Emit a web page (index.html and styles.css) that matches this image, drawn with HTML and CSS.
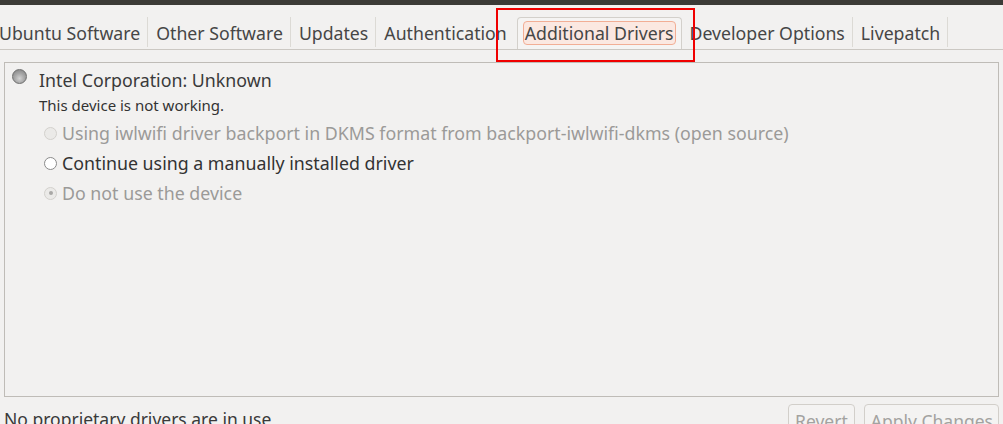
FILE: index.html
```html
<!DOCTYPE html>
<html>
<head>
<meta charset="utf-8">
<link rel="stylesheet" href="styles.css">
</head>
<body>
<div class="topbar"></div>
<div class="tabs">
  <div class="tab">Ubuntu Software</div>
  <div class="tab">Other Software</div>
  <div class="tab">Updates</div>
  <div class="tab tab-last-before">Authentication</div>
  <div class="tab tab-active"><span class="focus">Additional Drivers</span><div class="annot"></div></div>
  <div class="tab">Developer Options</div>
  <div class="tab">Livepatch</div>
</div>
<div class="frame">
  <div class="device">
    <span class="radio-big"></span>
    <span class="device-name">Intel Corporation: Unknown</span>
  </div>
  <div class="status">This device is not working.</div>
  <div class="options">
    <div class="option disabled"><span class="radio"></span><span>Using iwlwifi driver backport in DKMS format from backport-iwlwifi-dkms (open source)</span></div>
    <div class="option"><span class="radio"></span><span>Continue using a manually installed driver</span></div>
    <div class="option disabled"><span class="radio checked"></span><span>Do not use the device</span></div>
  </div>
</div>
<div class="footer">
  <div class="footer-text">No proprietary drivers are in use</div>
  <div class="buttons">
    <div class="btn btn-revert">Revert</div>
    <div class="btn">Apply Changes</div>
  </div>
</div>
</body>
</html>
```

FILE: styles.css
```css
html, body {
  margin: 0;
  padding: 0;
}
body {
  background: #f2f1f0;
  font-family: "Noto Sans", "DejaVu Sans", sans-serif;
  color: #3c3c3c;
  width: 1003px;
  height: 424px;
  overflow: hidden;
}
.topbar {
  height: 5px;
  background: #3c3b37;
}
.tabs {
  display: flex;
  padding-top: 12px;
  padding-bottom: 2px;
  border-bottom: 1px solid #cbc8c3;
  margin-left: -9px;
}
.tab {
  height: 30px;
  box-sizing: border-box;
  padding: 1px 7px 0 8px;
  display: flex;
  align-items: center;
  border-right: 1px solid #dcdad5;
  font-size: 17.7px;
  color: #464646;
  white-space: nowrap;
}
.tab-last-before {
  border-right: none;
  padding-right: 10px;
}
.tab-active {
  position: relative;
  height: 32px;
  margin-bottom: -2px;
  padding: 0 5px;
  border: 1px solid #d3d0cb;
  border-bottom: none;
  border-radius: 4px 4px 0 0;
  background: #f5f4f3;
  align-items: flex-start;
}
.focus {
  margin-top: 3px;
  padding: 0 1px;
  height: 22px;
  line-height: 22px;
  background: #fbe8e1;
  border: 1px solid #f2ae95;
  border-radius: 4px;
}
.annot {
  position: absolute;
  left: -22px;
  top: -10px;
  width: 195px;
  height: 50px;
  border: 2px solid #f00000;
}
.frame {
  margin: 12px 4px 0 4px;
  height: 333px;
  border: 1px solid #bfbcb7;
}
.device {
  display: flex;
  align-items: flex-start;
  padding: 5px 0 0 7px;
}
.radio-big {
  margin-top: 1px;
  width: 13px;
  height: 13px;
  border-radius: 50%;
  border: 1px solid #6e6e6e;
  background: radial-gradient(circle at 50% 65%, #d2d2d2 0%, #a8a8a8 45%, #7e7e7e 100%);
  flex: none;
}
.device-name {
  margin-left: 12px;
  font-size: 17.8px;
  color: #3a3a3a;
}
.status {
  margin: 3px 0 0 34px;
  font-size: 15px;
  color: #333;
}
.options {
  margin: 3px 0 0 39px;
}
.option {
  display: flex;
  align-items: center;
  height: 30px;
  font-size: 17.8px;
  color: #333;
}
.option.disabled {
  color: #9b9a98;
}
.radio {
  width: 11px;
  height: 11px;
  border-radius: 50%;
  border: 1px solid #8a8a8a;
  background: #fff;
  margin-right: 5px;
  flex: none;
  display: flex;
  align-items: center;
  justify-content: center;
}
.disabled .radio {
  border-color: #d3d1cd;
  background: #ebeae8;
}
.radio.checked::after {
  content: "";
  width: 4px;
  height: 4px;
  border-radius: 50%;
  background: #a9a8a6;
}
.footer {
  display: flex;
  justify-content: space-between;
  align-items: flex-start;
  padding: 0 4px 0 4px;
}
.footer-text {
  margin-top: 10px;
  font-size: 17.5px;
  color: #3a3a3a;
}
.buttons {
  display: flex;
  gap: 9px;
  margin-top: 7px;
}
.btn {
  height: 28px;
  padding: 4px 5px 0 6px;
  border: 1px solid #d2cfca;
  border-radius: 4px;
  background: #f4f3f2;
  color: #a3a2a0;
  font-size: 17.5px;
}
.btn-revert {
  padding-right: 6px;
}
```
